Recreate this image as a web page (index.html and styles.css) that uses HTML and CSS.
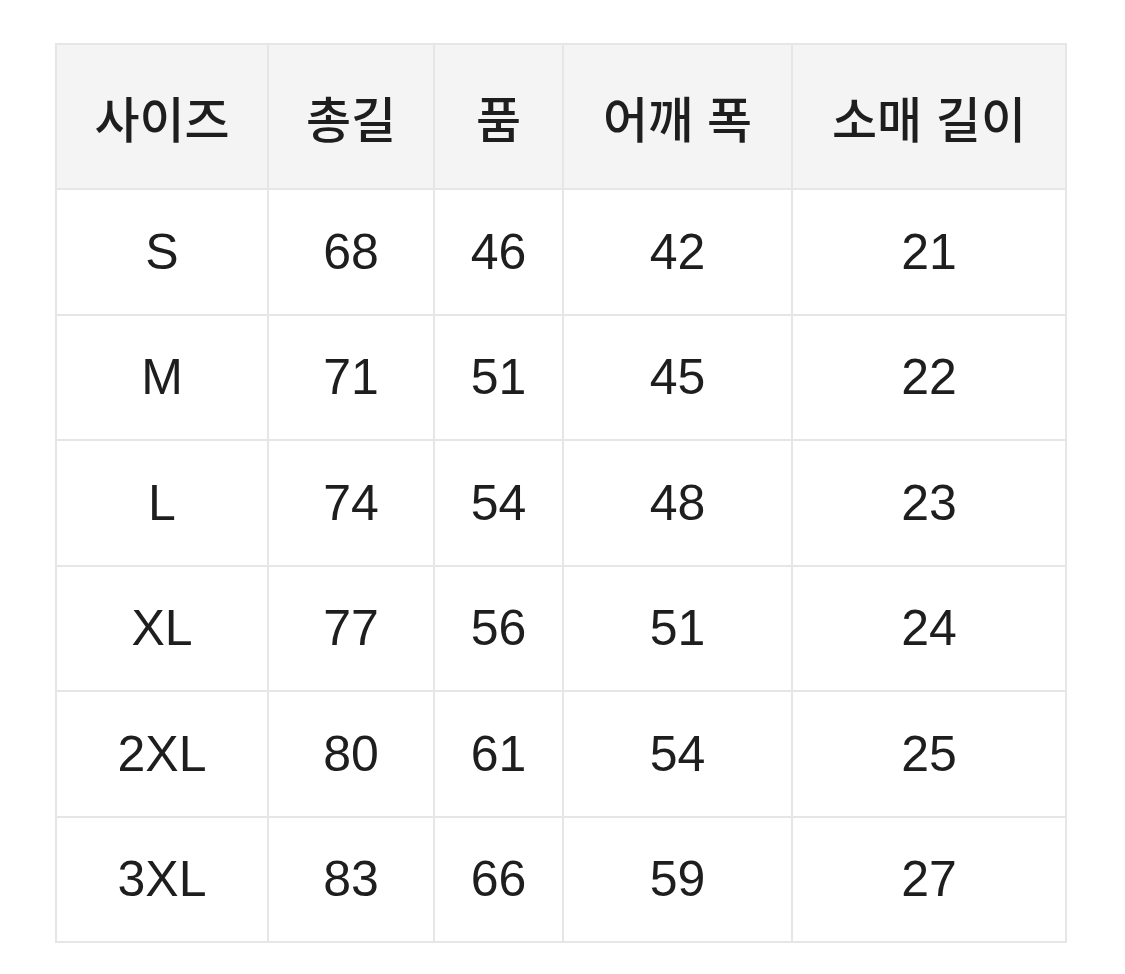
FILE: index.html
```html
<!DOCTYPE html>
<html lang="ko">
<head>
<meta charset="utf-8">
<link rel="stylesheet" href="styles.css">
</head>
<body>
<div class="wrap">
<table class="size-table">
  <colgroup>
    <col class="c1"><col class="c2"><col class="c3"><col class="c4"><col class="c5">
  </colgroup>
  <thead>
    <tr><th>사이즈</th><th>총길</th><th>품</th><th>어깨 폭</th><th>소매 길이</th></tr>
  </thead>
  <tbody>
    <tr><td>S</td><td>68</td><td>46</td><td>42</td><td>21</td></tr>
    <tr><td>M</td><td>71</td><td>51</td><td>45</td><td>22</td></tr>
    <tr><td>L</td><td>74</td><td>54</td><td>48</td><td>23</td></tr>
    <tr><td>XL</td><td>77</td><td>56</td><td>51</td><td>24</td></tr>
    <tr><td>2XL</td><td>80</td><td>61</td><td>54</td><td>25</td></tr>
    <tr><td>3XL</td><td>83</td><td>66</td><td>59</td><td>27</td></tr>
  </tbody>
</table>
</div>
</body>
</html>
```
FILE: styles.css
```css
html, body {
  margin: 0;
  padding: 0;
  background: #ffffff;
}
.wrap {
  padding: 43px 0 0 55px;
}
.size-table {
  border-collapse: collapse;
  table-layout: fixed;
  width: 1010px;
  font-family: "Liberation Sans", "Noto Sans CJK KR", sans-serif;
  color: #1e1e1e;
}
.c1 { width: 212px; }
.c2 { width: 166px; }
.c3 { width: 129px; }
.c4 { width: 229px; }
.c5 { width: 274px; }
.size-table th,
.size-table td {
  border: 2px solid #e6e6e6;
  text-align: center;
  vertical-align: middle;
  padding: 0;
}
.size-table th {
  background: #f4f4f4;
  height: 143px;
  font-size: 49px;
  font-family: "Noto Sans CJK KR", sans-serif;
  font-weight: 500;
}
.size-table td {
  height: 123.5px;
  font-size: 50px;
}
```
